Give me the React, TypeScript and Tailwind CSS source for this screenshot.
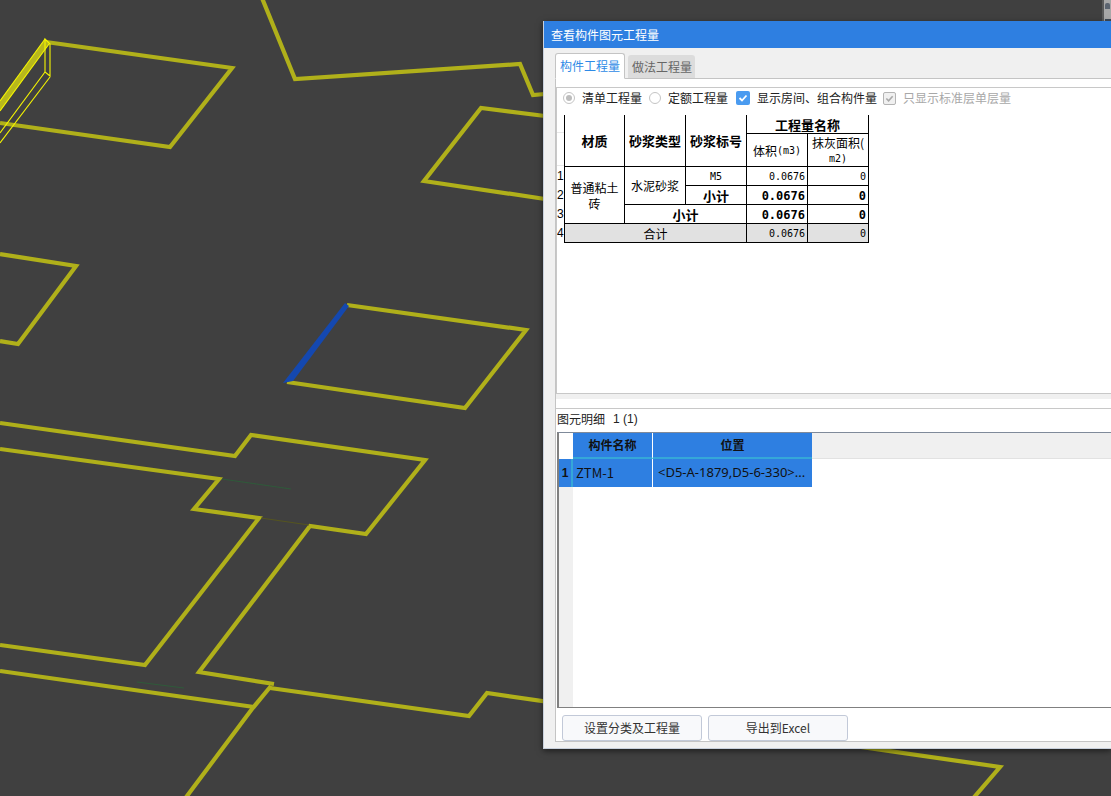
import React from "react";

const Y = "#b0b01a";
const cjk = "font-['Noto_Sans_CJK_SC',sans-serif]";

const paths: string[] = [
  "M46,42 L232,68 L170,147 L0,123",
  "M262,-2 L295,79 L520,64 L533,95 L545,94",
  "M545,116 L481,108 L424,181 L545,199",
  "M0,254 L76,266 L18,344 L0,341",
  "M347,305 L526,330 L465,408 L287,382",
  "M0,423 L235,456 L251,435 L425,460 L366,534 L310,526 L199,672 L274,684",
  "M0,449 L219,479 L194,509 L259,518 L145,665 L0,645",
  "M0,671 L254,707",
  "M270,688 L469,716 L487,693 L1000,767 L970,802",
  "M271,686 L252,709 L184,800",
];

function Canvas() {
  return (
    <svg className="absolute left-0 top-0" width={1111} height={796} viewBox="0 0 1111 796">
      <g fill="none" stroke={Y} strokeWidth={4.2} strokeLinejoin="miter" strokeMiterlimit={6}>
        {paths.map((d) => (
          <path key={d} d={d} />
        ))}
      </g>
      <polygon points="345,303 349,306 293,381 283,383" fill="#1448b0" />
      <g stroke="#2f5a3a" strokeWidth={1} fill="none">
        <path d="M222,479 L291,489" />
        <path d="M137,682 L184,688" />
      </g>
      <path d="M261,518 L309,525" stroke="#55551f" strokeWidth={1} fill="none" />
      {/* selected column wireframe */}
      <path d="M45,39 L0,101 L0,111 L49,44 Z" fill="#b8b81c" />
      <g fill="none" stroke="#f6f600" strokeWidth={1.1}>
        <path d="M45,39 L0,101" />
        <path d="M49,44 L0,111" />
        <path d="M45,39 L50,44 L50,76 L45,72 Z" />
        <path d="M45,72 L0,133" />
        <path d="M50,77 L0,143" />
      </g>
    </svg>
  );
}

const cell = "bg-white flex items-center justify-center pt-px text-black";
const head = `${cell} font-bold text-[13px] leading-[16px]`;
const mono = "font-['DejaVu_Sans_Mono','Noto_Sans_CJK_SC',monospace]";

function QuantityTable() {
  return (
    <div className="flex">
      <div className="w-[7px] flex flex-col overflow-hidden text-[12px] leading-[18px] text-black font-['Liberation_Sans',sans-serif]">
        <div className="h-[18px] border-b border-[#e8e8e8]" />
        <div className="h-[33px] border-b border-[#e8e8e8]" />
        <div className="h-[19px] pt-px">1</div>
        <div className="h-[19px] pt-px">2</div>
        <div className="h-[19px] pt-px">3</div>
        <div className="h-[19px] pt-px">4</div>
      </div>
      <div className={`grid grid-cols-[59px_60px_60px_60px_60px] grid-rows-[18px_32px_18px_18px_18px_18px] gap-px bg-black pl-px pb-px pr-px ${cjk}`}>
        <div className={`${head} row-span-2`}>材质</div>
        <div className={`${head} row-span-2`}>砂浆类型</div>
        <div className={`${head} row-span-2`}>砂浆标号</div>
        <div className={`${head} col-span-2`}>工程量名称</div>
        <div className={`${cell} text-[12px]`}>
          体积<span className={`${mono} text-[10px]`}>(m3)</span>
        </div>
        <div className={`${cell} text-[12px] leading-[14px] text-center`}>
          <span>
            抹灰面积(
            <br />
            <span className={`${mono} text-[10px]`}>m2)</span>
          </span>
        </div>

        <div className={`${cell} row-span-3 text-[12px] leading-[16px] text-center`}>
          <span>
            普通粘土
            <br />
            砖
          </span>
        </div>
        <div className={`${cell} row-span-2 text-[12px]`}>水泥砂浆</div>
        <div className={`${cell} ${mono} text-[10px]`}>M5</div>
        <div className={`${cell} ${mono} text-[10px] !justify-end pr-[2px]`}>0.0676</div>
        <div className={`${cell} ${mono} text-[10px] !justify-end pr-[2px]`}>0</div>

        <div className={head}>小计</div>
        <div className={`${cell} ${mono} text-[12px] font-bold !justify-end pr-[2px]`}>0.0676</div>
        <div className={`${cell} ${mono} text-[12px] font-bold !justify-end pr-[2px]`}>0</div>

        <div className={`${head} col-span-2`}>小计</div>
        <div className={`${cell} ${mono} text-[12px] font-bold !justify-end pr-[2px]`}>0.0676</div>
        <div className={`${cell} ${mono} text-[12px] font-bold !justify-end pr-[2px]`}>0</div>

        <div className="col-span-3 bg-[#e1e1e1] flex items-center justify-center pt-px text-[12px] text-black">合计</div>
        <div className={`bg-[#e1e1e1] flex items-center justify-end pt-px pr-[2px] text-[10px] text-black ${mono}`}>0.0676</div>
        <div className={`bg-[#e1e1e1] flex items-center justify-end pt-px pr-[2px] text-[10px] text-black ${mono}`}>0</div>
      </div>
    </div>
  );
}

function Options() {
  return (
    <div className={`h-[27px] pb-[7px] flex items-center text-[12px] leading-none text-[#222] ${cjk}`}>
      <span className="ml-[6px] w-[12px] h-[12px] rounded-full border border-[#c4c4c4] flex items-center justify-center">
        <span className="w-[6px] h-[6px] rounded-full bg-[#bdbdbd]" />
      </span>
      <span className="ml-[7px]">清单工程量</span>
      <span className="ml-[7px] w-[12px] h-[12px] rounded-full border border-[#c4c4c4] bg-white" />
      <span className="ml-[7px]">定额工程量</span>
      <span className="ml-[8px] w-[14px] h-[14px] rounded-[2px] bg-[#4a9bf0] flex items-center justify-center">
        <svg width="10" height="10" viewBox="0 0 10 10" fill="none" stroke="#fff" strokeWidth="1.8">
          <path d="M1.5,5 L4,7.5 L8.5,2.5" />
        </svg>
      </span>
      <span className="ml-[7px]">显示房间、组合构件量</span>
      <span className="ml-[6px] w-[13px] h-[13px] rounded-[2px] border border-[#b4b4b4] bg-[#f0f0f0] flex items-center justify-center">
        <svg width="9" height="9" viewBox="0 0 10 10" fill="none" stroke="#a8a8a8" strokeWidth="1.8">
          <path d="M1.5,5 L4,7.5 L8.5,2.5" />
        </svg>
      </span>
      <span className="ml-[7px] text-[#a8a8a8]">只显示标准层单层量</span>
    </div>
  );
}

function DetailGrid() {
  return (
    <div className="h-[276px] ml-px border-t border-t-[#7f8a9a] border-b border-b-[#808080] border-l-2 border-l-[#808080] flex flex-col">
      <div className="h-[26px] flex shrink-0">
        <div className="w-[14px] bg-white" />
        <div className="w-[80px] bg-[#2e7fe1] border-b-2 border-b-[#35a7d8] border-r border-r-white flex items-center justify-center font-bold text-[12px] text-[#111]">
          构件名称
        </div>
        <div className="w-[159px] bg-[#2e7fe1] border-b-2 border-b-[#35a7d8] flex items-center justify-center font-bold text-[12px] text-[#111]">
          位置
        </div>
        <div className="flex-1 bg-[#f0f0f0] border-b border-b-[#e2e2e2]" />
      </div>
      <div className="flex flex-1 min-h-0">
        <div className="w-[14px] bg-[#f0f0f0] flex flex-col">
          <div className="h-[28px] bg-[#2e7fe1] border-r-2 border-r-[#35a7d8] flex items-center justify-center font-bold text-[12px] text-[#111] font-['Liberation_Sans',sans-serif]">
            1
          </div>
        </div>
        <div className="flex-1 bg-white">
          <div className="h-[28px] flex">
            <div className="w-[80px] bg-[#2e7fe1] border-r border-r-white flex items-center pl-[3px] text-[13px] text-[#111]">
              ZTM-1
            </div>
            <div className="w-[159px] bg-[#2e7fe1] flex items-center pl-[5px] text-[13px] text-[#111] whitespace-nowrap overflow-hidden font-['Noto_Sans',sans-serif]">
              &lt;D5-A-1879,D5-6-330&gt;...
            </div>
          </div>
        </div>
      </div>
    </div>
  );
}

function Dialog() {
  return (
    <div className={`absolute left-[543px] top-[21px] w-[568px] h-[728px] flex flex-col border-l border-b border-[#c8d0dc] bg-[#f0f0f0] shadow-[0_2px_6px_rgba(0,0,0,0.55)] ${cjk}`}>
      <div className="h-[27px] shrink-0 bg-[#2e7fe1] flex items-center pl-[7px] text-[12px] text-white">查看构件图元工程量</div>
      <div className="flex-1 flex flex-col pl-[11px] pb-[6px] min-h-0">
        <div className="h-[30px] shrink-0 flex items-end text-[12px]">
          <div className="w-[70px] h-[26px] -mb-px z-10 border border-[#c4c4c4] border-b-white bg-white rounded-t-[3px] flex items-center justify-center text-[#2e8ae6]">
            构件工程量
          </div>
          <div className="ml-[3px] w-[67px] h-[23px] pl-px bg-[#dcdcdc] rounded-t-[3px] flex items-center justify-center text-[#666]">
            做法工程量
          </div>
        </div>
        <div className="flex-1 min-h-0 border border-[#c4c4c4] border-r-0 bg-white pt-[8px] flex flex-col">
          <div className="h-[307px] shrink-0 border-t border-b border-l border-[#c8c8c8] bg-white">
            <Options />
            <QuantityTable />
          </div>
          <div className="h-[5px] shrink-0 bg-[#f0f0f0]" />
          <div className="h-[9px] shrink-0" />
          <div className="h-[24px] shrink-0 border-t border-[#c8c8c8] pl-px pb-[4px] flex items-center gap-[8px] text-[12px] text-[#222]">
            <span>图元明细</span>
            <span className="font-['Liberation_Sans',sans-serif]">1 (1)</span>
          </div>
          <DetailGrid />
          <div className="flex gap-[6px] pl-[6px] pt-[7px]">
            <button className="w-[140px] h-[26px] bg-[#f8f9fb] border border-[#c2c9d8] rounded-[3px] text-[12px] text-[#333]">设置分类及工程量</button>
            <button className="w-[140px] h-[26px] bg-[#f8f9fb] border border-[#c2c9d8] rounded-[3px] text-[12px] text-[#333]">导出到Excel</button>
          </div>
        </div>
      </div>
    </div>
  );
}

export default function App() {
  return (
    <div className="relative w-[1111px] h-[796px] overflow-hidden bg-[#404040]">
      <Canvas />
      <div className="absolute right-0 top-0 w-[9px] h-[21px] bg-[#a8a8a8] border-l-2 border-l-[#5a5a5a]">
        <div className="ml-[1px] mt-[3px] w-[5px] h-[6px] bg-[#5b6470] rounded-t-[2px]" />
        <div className="ml-[1px] mt-[10px] w-[6px] h-[2px] bg-[#3e4a58]" />
      </div>
      <Dialog />
    </div>
  );
}
